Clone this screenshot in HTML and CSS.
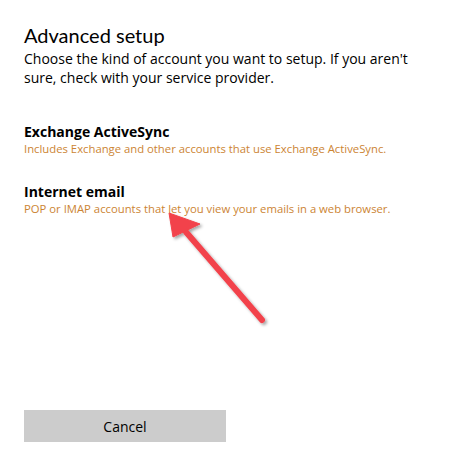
FILE: index.html
```html
<!DOCTYPE html>
<html lang="en">
<head>
    <title>Advanced setup</title>
    <link rel="stylesheet" href="styles.css">
</head>
<body>
    <div class="setup">
        <h1>Advanced setup</h1>
        <p class="intro">Choose the kind of account you want to setup. If you aren't sure, check with your service provider.</p>

        <div class="option">
            <h2>Exchange ActiveSync</h2>
            <p>Includes Exchange and other accounts that use Exchange ActiveSync.</p>
        </div>

        <div class="option">
            <h2>Internet email</h2>
            <p>POP or IMAP accounts that let you view your emails in a web browser.</p>
        </div>

        <button class="cancel">Cancel</button>
    </div>

    <!-- annotation arrow -->
    <svg class="arrow" width="456" height="456" viewBox="0 0 456 456">
        <defs>
            <filter id="shadow" x="-20%" y="-20%" width="140%" height="140%">
                <feDropShadow dx="2" dy="2" stdDeviation="1.5" flood-color="#000" flood-opacity="0.35"/>
            </filter>
        </defs>
        <g filter="url(#shadow)" fill="#f2434b" stroke="#f2434b">
            <line x1="186" y1="232" x2="262" y2="320" stroke-width="6" stroke-linecap="round"/>
            <polygon points="169,213 173,237 200,224" stroke-width="1" stroke-linejoin="round"/>
        </g>
    </svg>
</body>
</html>
```

FILE: styles.css
```css
body {
    margin: 0;
    padding: 0;
    background-color: #fff;
    font-family: "Open Sans", "Noto Sans", sans-serif;
    color: #000;
}

.setup {
    padding: 22px 24px 0 24px;
    width: 400px;
}

.setup h1 {
    font-family: Lato, "Open Sans", sans-serif;
    font-size: 20px;
    font-weight: 400;
    margin: 0;
    line-height: 26px;
}

.intro {
    font-size: 14px;
    line-height: 19px;
    margin: 1px 0 0 0;
}

.option h2 {
    font-size: 14px;
    font-weight: 700;
    margin: 0;
    line-height: 20px;
}

.option p {
    font-size: 11.3px;
    color: #cc8433;
    margin: 0;
    line-height: 14px;
}

.setup .option:nth-of-type(1) {
    margin-top: 35px;
}

.setup .option + .option {
    margin-top: 26px;
}

.cancel {
    display: block;
    margin-top: 194px;
    width: 202px;
    height: 32px;
    background-color: #ccc;
    border: none;
    font-family: "Open Sans", "Noto Sans", sans-serif;
    font-size: 14px;
    color: #000;
    padding: 0;
}

.arrow {
    position: absolute;
    left: 0;
    top: 0;
}
```
